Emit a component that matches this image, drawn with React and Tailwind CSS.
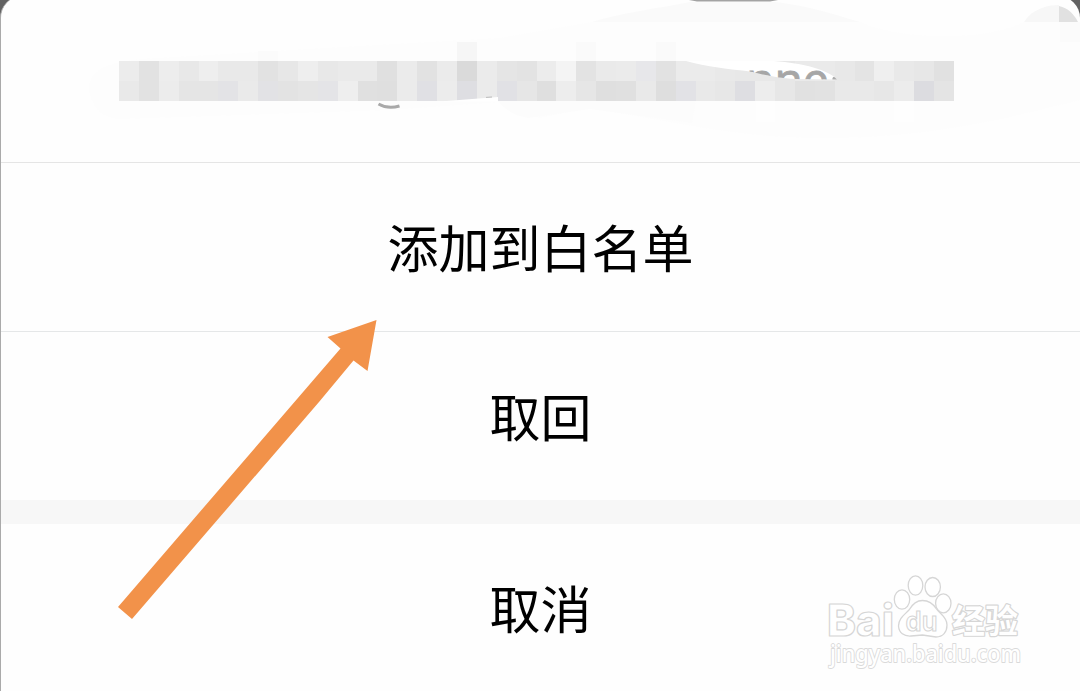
import React from "react";

const topRow =
  "ececec e2e2e2 ededed e8e8e8 eeeeee e9e9e9 e9e9e9 e2e2e2 e7e7e7 eeeeee e8e8e8 eaeaea eaeaea e0e0e0 ebebeb e2e2e2 ebebeb dadada ebebeb e5e5e5 e3e3e3 ececec f4f4f4 e3e3e3 eaeaea ebebeb e7e7ea e2e2e2 ebebeb ebebeb e9e9e9 e8e8e8 e8e8e8 e7e7e7 eaeaea eaeaea e8e8e8 e4e4e4 efefef e9e9e9 e7e7e7 e1e1e1".split(" ");

const bottomRow =
  "e9e9e9 e2e2e2 ececec e5e5e5 e5e5e5 e3e3e6 eaeaea e2e2e5 e3e3e3 e5e5e5 e4e4e7 eeeeee e0e0e0 dfdfdf ebebeb e0e0e4 ececec dedee2 ebebeb e1e1e5 e6e6e6 dfdfdf ededed e6e6e6 dfdfdf e0e0e0 e9e9e9 dedede e2e2e6 e9e9e9 e7e7e7 dedee2 ededed e7e7e7 e1e1e1 e2e2e2 e9e9e9 e9e9e9 e7e7e7 ececec dcdce0 e4e4e4".split(" ");

const LENS = "M686 61C706 67 730 69 750 71.500C766 75 776 78 796 79L837 79.500C829 70 803 63 774 61Z";

// soft smudges behind the censored address
const Smudges = () => (
  <svg className="absolute inset-0" width="1080" height="162" viewBox="0 0 1080 162">
    <path d="M90 95C84 70 108 60 158 58L360 46L500 38L592 22L860 22C900 40 985 42 1024 22H1080V100C1020 115 940 137 830 138C740 138 690 125 590 108L540 118L500 102L390 110L120 119C105 119 94 110 90 95Z" fill="#fdfdfd" />
    <path d="M592 22C620 13 660 8 690 2H775C810 6 832 14 860 22Z" fill="#fafafa" />
    <path d="M689 0H778L770 1.6H697Z" fill="#a3a3a3" />
    <path d="M1024 22C1032 9 1047 5 1059 5V22Z" fill="#f7f7f7" />
    <path d="M1059 6C1068 8 1074 14 1078 22H1059Z" fill="#e1e1e1" />
    <rect x="1060" y="22" width="20" height="20" fill="#fbfbfb" />
    <rect x="457" y="42" width="20" height="20" fill="#f6f6f6" />
    <rect x="576" y="42" width="20" height="20" fill="#fafafa" />
    <rect x="656" y="42" width="20" height="20" fill="#fafafa" />
    <rect x="258" y="51" width="20" height="10" fill="#fbfbfb" />
    <path d="M498 101H696L692 123L590 109L528 118C516 116 505 110 498 101Z" fill="#fcfcfc" />
    <rect x="756" y="101" width="19" height="21" fill="#fefefe" />
    <rect x="894" y="101" width="20" height="21" fill="#fefefe" />
  </svg>
);

const Fragments = () => (
  <svg className="absolute inset-0" width="1080" height="162" viewBox="0 0 1080 162">
    <clipPath id="lens">
      <path d={LENS} />
    </clipPath>
    <path d={LENS} fill="#fff" />
    <g clipPath="url(#lens)">
      <text x="746" y="96" fill="#a6a6a6" stroke="#a6a6a6" strokeWidth="0.8" className="font-['Noto_Sans'] text-[46px]">
        nne
      </text>
      <circle cx="835" cy="79" r="2.6" fill="#aaa" />
    </g>
    <path d="M440 101.5L498 97V101.5Z" fill="#fff" />
    <path d="M486 97.4L492 97" stroke="#bbb" strokeWidth="1" />
    <path d="M378.500 104Q388 109.500 399.500 106" fill="none" stroke="#a9a9a9" strokeWidth="3" />
  </svg>
);

const Mosaic = () => (
  <div className="grid grid-cols-[repeat(42,minmax(0,1fr))] w-[835px] h-10 mt-[61px] ml-[119px] relative">
    {[...topRow, ...bottomRow].map((c, i) => (
      <div key={i} className="h-5" style={{ backgroundColor: `#${c}` }} />
    ))}
  </div>
);

const Arrow = () => (
  <svg className="absolute left-[110px] top-[310px]" width="275" height="320" viewBox="110 310 275 320">
    <path d="M376.500 320L367.500 371L353.500 360.500L319 402L132 619L118 607L340.500 348.500L327.500 337Z" fill="#f2924a" />
  </svg>
);

const Watermark = () => (
  <svg
    className="absolute left-[810px] top-[560px]"
    width="230"
    height="125"
    viewBox="810 560 230 125"
    fill="#fff"
    stroke="#d6d6d6"
    strokeWidth="1.3"
  >
    <text x="827" y="636" textLength="67" lengthAdjust="spacingAndGlyphs" strokeWidth="1.2" strokeLinejoin="round" className="font-['Inter'] text-[44px] font-extrabold">
      Bai
    </text>
    <ellipse cx="902" cy="599.500" rx="7.700" ry="9.700" />
    <ellipse cx="915.500" cy="585.500" rx="7.300" ry="9.700" />
    <ellipse cx="932.700" cy="587" rx="7.700" ry="9.500" />
    <ellipse cx="943.300" cy="603.300" rx="7.700" ry="9.500" />
    <path d="M922.500 600.500C916 600.500 912.500 604 909 610C905 614.500 898.500 618 898.500 626C899 633 904 636.500 911 636L922.500 635L936 637C943 637 947 632 947 625C947 617 940 614 936.500 609C933 603.500 929 600.500 922.500 600.500Z" />
    <text x="905.500" y="630.500" textLength="32" lengthAdjust="spacingAndGlyphs" strokeWidth="1.1" className="font-['Inter'] text-[27px] font-semibold">
      du
    </text>
    <text x="952" y="633" textLength="66" lengthAdjust="spacingAndGlyphs" strokeWidth="2.4" strokeLinejoin="round" paintOrder="stroke" className="font-['Noto_Sans_CJK_SC',sans-serif] text-[33px] font-bold">
      经验
    </text>
    <text x="830" y="661.500" textLength="191" lengthAdjust="spacingAndGlyphs" stroke="#dadada" strokeWidth="1.8" strokeLinejoin="round" paintOrder="stroke" className="font-['Noto_Sans'] text-[23px] font-medium">
      jingyan.baidu.com
    </text>
  </svg>
);

const SheetButton = ({ children }) => (
  <button className="block w-full h-[168px] shrink-0 pb-0.5 text-center text-[51px] leading-none text-black">
    {children}
  </button>
);

const App = () => {
  return (
    <div className="relative w-[1080px] h-[691px] overflow-hidden bg-[#626262] font-['Noto_Sans_CJK_SC',sans-serif]">
      <div className="relative flex flex-col h-[720px] -mt-1 pt-1 overflow-hidden bg-[#fefefe] border-l border-[#aaa] rounded-t-[22px]">
        <div className="relative h-[162px] shrink-0 -ml-px overflow-hidden">
          <Smudges />
          <Mosaic />
          <Fragments />
        </div>
        <div className="h-px shrink-0 bg-[#e5e5e5]" />
        <SheetButton>添加到白名单</SheetButton>
        <div className="h-px shrink-0 bg-[#e5e7e8]" />
        <SheetButton>取回</SheetButton>
        <div className="h-6 shrink-0 bg-[#f7f7f7]" />
        <SheetButton>取消</SheetButton>
      </div>

      <Arrow />
      <Watermark />
    </div>
  );
};

export default App;
